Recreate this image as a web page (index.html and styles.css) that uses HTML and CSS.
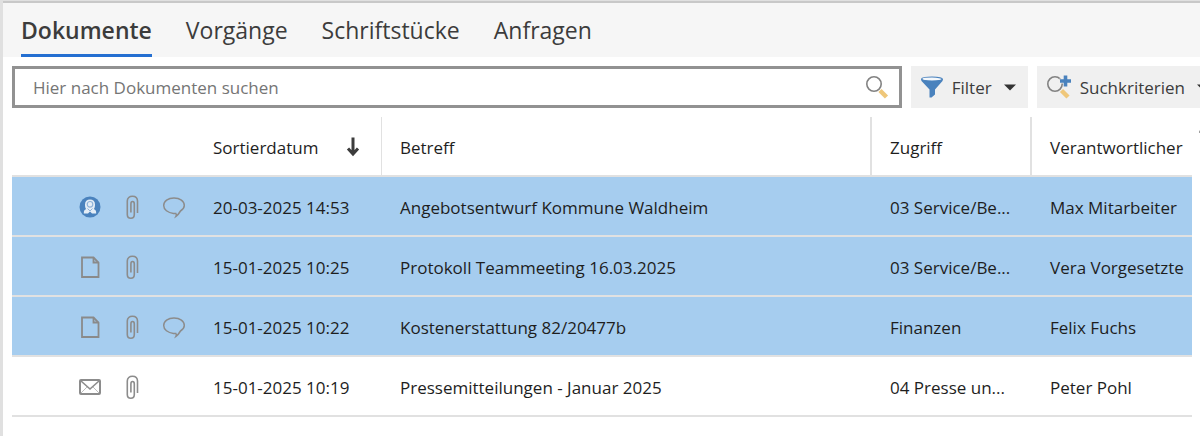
FILE: index.html
```html
<!DOCTYPE html>
<html lang="de">
<head>
    <meta charset="UTF-8">
    <title>Dokumente</title>
    <link rel="stylesheet" href="styles.css">
</head>
<body>
    <svg class="sprite" aria-hidden="true">
        <symbol id="clip" viewBox="0 0 14 26">
            <path d="M12.500 19V7C12.500 4 10.300 2.200 7.400 2.200S2.300 4 2.300 7V20.500c0 2.600 1.500 3.700 3.500 3.700s3.500-1.100 3.500-3.700V10c0-1.700-.6-2.500-1.700-2.500S5.900 8.300 5.900 10v8.500" fill="none" stroke="#8c8c8c" stroke-width="1.600"/>
        </symbol>
        <symbol id="bubble" viewBox="0 0 24 24">
            <path d="M14 21.300c.6-1.200.5-2-.2-2.900-.8.100-1.400.1-2.300 0C5.800 17.800 1.700 14.600 1.700 10.500S6 3 12 3s10.300 3.300 10.300 7.500c0 2.500-1.500 4-3.800 5.500-1 1.700-2.300 3.800-4.500 5.300z" fill="none" stroke="#8c8c8c" stroke-width="1.500"/>
        </symbol>
        <symbol id="page" viewBox="0 0 20 24">
            <path d="M2 2.500h11.500L18.500 7.500v14.500H2z" fill="none" stroke="#8a8a8a" stroke-width="1.800"/>
            <path d="M13.500 2.500v5h5" fill="none" stroke="#8a8a8a" stroke-width="1.800"/>
        </symbol>
        <symbol id="mail" viewBox="0 0 22 16">
            <rect x="1" y="1" width="20" height="14" rx="1" fill="none" stroke="#8c8c8c" stroke-width="2"/>
            <path d="M2 2l9 8 9-8" fill="none" stroke="#8c8c8c" stroke-width="1.600"/>
            <path d="M2 14l6-6M20 14l-6-6" stroke="#bdbdbd"/>
        </symbol>
        <symbol id="person" viewBox="0 0 22 22">
            <circle cx="11" cy="11" r="10.500" fill="#4a82bd"/>
            <path d="M4.800 17.500c0-2.500.5-3.800 2.400-4.500-1-1-1.200-2.600-1.200-4.500C6 5.200 8 3.500 11 3.500s5 1.700 5 5c0 1.900-.2 3.500-1.200 4.500 1.900.7 2.400 2 2.400 4.500h-4.200L11 15.500l-2 2z" fill="#e4edf6"/>
            <circle cx="11" cy="8.300" r="2.800" fill="none" stroke="#8fb2d8" stroke-width="1.200"/>
            <path d="M8.500 12.500l2.500 2.500 2.500-2.500" fill="none" stroke="#8fb2d8"/>
        </symbol>
        <symbol id="lens" viewBox="0 0 24 24">
            <path d="M15 15.500l6.500 6.500" stroke="#efc77a" stroke-width="4.500"/>
            <circle cx="9" cy="9" r="7.200" fill="none" stroke="#828282" stroke-width="1.600"/>
        </symbol>
        <symbol id="caret" viewBox="0 0 12 7">
            <path d="M0 0.500h12l-6 6z" fill="#333"/>
        </symbol>
    </svg>

    <nav class="tabs">
        <a class="tab active" href="#dokumente">Dokumente</a>
        <a class="tab" href="#vorgaenge">Vorgänge</a>
        <a class="tab" href="#schriftstuecke">Schriftstücke</a>
        <a class="tab" href="#anfragen">Anfragen</a>
    </nav>

    <div class="toolbar">
        <form class="search">
            <input type="search" aria-label="Hier nach Dokumenten suchen" placeholder="Hier nach Dokumenten suchen">
            <button class="search-button" type="button" aria-label="Suchen">
                <svg width="24" height="24"><use href="#lens"/></svg>
            </button>
        </form>
        <button class="tool" type="button">
            <svg width="22" height="22" viewBox="0 0 22 22">
                <path d="M0 3l.5 2L8.500 13.500v8h2l3.500-3v-5L21.500 5l.5-2z" fill="#4a82bd"/>
                <ellipse cx="11" cy="3" rx="10.300" ry="2" fill="#f4f8fc" stroke="#4a82bd" stroke-width="1.200"/>
            </svg>
            <span>Filter</span>
            <svg class="caret" width="12" height="7"><use href="#caret"/></svg>
        </button>
        <button class="tool" type="button">
            <svg width="24" height="24" viewBox="0 0 24 24">
                <path d="M14.500 15.500l6.500 6.500" stroke="#efc77a" stroke-width="4.500"/>
                <circle cx="8" cy="9" r="7.200" fill="none" stroke="#828282" stroke-width="1.600"/>
                <path d="M18.500 0v11.500M12.500 6h11.500" stroke="#f0f0f0" stroke-width="5"/>
                <path d="M18.500 0.500v11M13 6h11" stroke="#4a82bd" stroke-width="3.600"/>
            </svg>
            <span>Suchkriterien</span>
            <svg class="caret" width="12" height="7"><use href="#caret"/></svg>
        </button>
    </div>

    <div class="list">
        <table class="documents">
            <colgroup>
                <col class="col-space">
                <col class="col-icon">
                <col class="col-icon">
                <col class="col-icon">
                <col class="col-date">
                <col>
                <col class="col-wide">
                <col class="col-wide">
            </colgroup>
            <thead>
                <tr>
                    <td></td>
                    <td></td>
                    <td></td>
                    <td></td>
                    <th class="thin">
                        <div class="sorted">
                            <span>Sortierdatum</span>
                            <svg width="14" height="20" viewBox="0 0 14 20">
                                <path d="M7 0.500v17M2 11.500l5 5.500 5-5.500" fill="none" stroke="#3c3c3c" stroke-width="3"/>
                            </svg>
                        </div>
                    </th>
                    <th class="line">Betreff</th>
                    <th class="line">Zugriff</th>
                    <th>Verantwortlicher</th>
                </tr>
            </thead>
            <tbody>
                <tr class="selected">
                    <td></td>
                    <td class="icon"><svg width="22" height="22"><use href="#person"/></svg></td>
                    <td class="icon"><svg width="14" height="26"><use href="#clip"/></svg></td>
                    <td class="icon"><svg width="24" height="24"><use href="#bubble"/></svg></td>
                    <td>20-03-2025 14:53</td>
                    <td>Angebotsentwurf Kommune Waldheim</td>
                    <td>03 Service/Be...</td>
                    <td>Max Mitarbeiter</td>
                </tr>
                <tr class="selected">
                    <td></td>
                    <td class="icon"><svg width="20" height="24"><use href="#page"/></svg></td>
                    <td class="icon"><svg width="14" height="26"><use href="#clip"/></svg></td>
                    <td></td>
                    <td>15-01-2025 10:25</td>
                    <td>Protokoll Teammeeting 16.03.2025</td>
                    <td>03 Service/Be...</td>
                    <td>Vera Vorgesetzte</td>
                </tr>
                <tr class="selected">
                    <td></td>
                    <td class="icon"><svg width="20" height="24"><use href="#page"/></svg></td>
                    <td class="icon"><svg width="14" height="26"><use href="#clip"/></svg></td>
                    <td class="icon"><svg width="24" height="24"><use href="#bubble"/></svg></td>
                    <td>15-01-2025 10:22</td>
                    <td>Kostenerstattung 82/20477b</td>
                    <td>Finanzen</td>
                    <td>Felix Fuchs</td>
                </tr>
                <tr>
                    <td></td>
                    <td class="icon"><svg width="22" height="16"><use href="#mail"/></svg></td>
                    <td class="icon"><svg width="14" height="26"><use href="#clip"/></svg></td>
                    <td></td>
                    <td>15-01-2025 10:19</td>
                    <td>Pressemitteilungen - Januar 2025</td>
                    <td>04 Presse un...</td>
                    <td>Peter Pohl</td>
                </tr>
            </tbody>
        </table>
        <div class="scroll">
            <svg width="10" height="6" viewBox="0 0 10 6"><path d="M0 6V4l5-4 5 4v2z" fill="#a0a0a0"/></svg>
        </div>
    </div>
</body>
</html>
```

FILE: styles.css
```css
* {
    box-sizing: border-box;
}
html {
    min-height: 100%;
    border-top: 1px solid #e0e0e0;
    border-left: 3px solid #e0e0e0;
    background-color: #fff;
    overflow: hidden;
}
body {
    margin: 0;
    border-top: 2px solid #c8c8c8;
    font-family: "Segoe UI", "Open Sans", sans-serif;
    font-size: 17px;
    color: #1e1e1e;
}
svg {
    display: block;
    flex: none;
}
.sprite {
    display: none;
}
.tabs {
    display: flex;
    gap: 34px;
    padding: 0 18px;
    background-color: #f6f6f6;
}
.tab {
    height: 54px;
    border-bottom: 3px solid transparent;
    font-size: 23px;
    line-height: 54px;
    color: #3c3c3c;
    text-decoration: none;
}
.tab.active {
    border-bottom-color: #246fd1;
    font-weight: 600;
}
.toolbar {
    display: flex;
    gap: 9px;
    margin: 9px -21px 9px 9px;
}
.search {
    display: flex;
    flex: 1;
    height: 42px;
    border: 3px solid #929292;
}
.search input {
    flex: 1;
    min-width: 0;
    padding: 0 0 0 18px;
    border: 0;
    outline: 0;
    background: none;
    font: inherit;
}
.search input::placeholder {
    color: #757575;
    opacity: 1;
}
.search-button {
    padding: 0 10px;
    border: 0;
    background: none;
}
.tool {
    display: flex;
    align-items: center;
    gap: 9px;
    padding: 0 12px 0 10px;
    border: 0;
    background-color: #f0f0f0;
    font: inherit;
    color: #3c3c3c;
}
.caret {
    margin-left: 3px;
}
.list {
    display: flex;
    padding-left: 9px;
}
.documents {
    flex: 1;
    width: 100%;
    border-collapse: separate;
    border-spacing: 0;
    table-layout: fixed;
}
.documents th,
.documents td {
    height: 60px;
    padding: 2px 0 0 18px;
    border-bottom: 2px solid #e1e1e1;
    font-weight: normal;
    text-align: left;
    white-space: nowrap;
}
.documents .icon {
    padding: 2px 0 0;
}
.icon svg {
    margin: 0 auto;
}
.documents .thin {
    border-right: 1px solid #e1e1e1;
}
.documents .line {
    border-right: 2px solid #e1e1e1;
}
.sorted {
    display: flex;
    align-items: center;
    justify-content: space-between;
    padding-right: 21px;
}
.selected {
    background-color: #a6cdef;
}
.scroll {
    width: 8px;
    padding: 10px 0 0 7px;
    overflow: hidden;
}
.col-space {
    width: 57px;
}
.col-icon {
    width: 42px;
}
.col-date {
    width: 187px;
}
.col-wide {
    width: 160px;
}
```
